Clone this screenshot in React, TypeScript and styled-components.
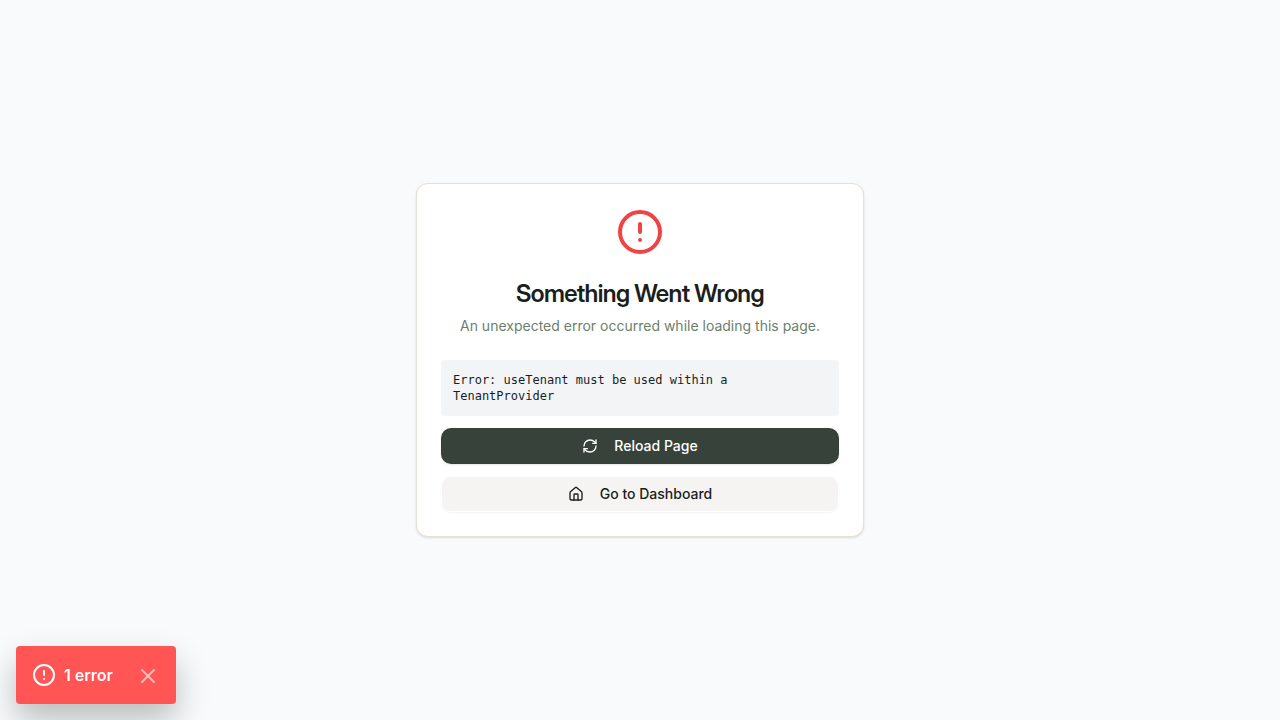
import React from "react";
import styled, { createGlobalStyle } from "styled-components";
import { CircleAlert, RefreshCw, House } from "lucide-react";

const GlobalStyle = createGlobalStyle`
  *, *::before, *::after { box-sizing: border-box; }
  body {
    margin: 0;
    background: #f9fafb;
    color: #1b1f1c;
    font-family: Inter, "Liberation Sans", sans-serif;
  }
`;

const Page = styled.main`
  min-height: 100vh;
  display: flex;
  align-items: center;
  justify-content: center;
  padding: 16px;
`;

const Card = styled.section`
  width: 100%;
  max-width: 448px;
  background: #fff;
  border: 1px solid #e8dfd5;
  border-radius: 12px;
  box-shadow: 0 1px 3px rgba(0, 0, 0, 0.1), 0 1px 2px -1px rgba(0, 0, 0, 0.1);
`;

const Header = styled.header`
  display: flex;
  flex-direction: column;
  align-items: center;
  gap: 6px;
  padding: 24px;
  text-align: center;
`;

const AlertIcon = styled(CircleAlert)`
  color: #ef4444;
  margin-bottom: 16px;
`;

const Title = styled.h1`
  margin: 0;
  font-family: "Inter Display", Inter, "Liberation Sans", sans-serif;
  font-size: 24px;
  line-height: 32px;
  font-weight: 600;
  letter-spacing: -0.025em;
`;

const Description = styled.p`
  margin: 0;
  font-size: 14px;
  line-height: 20px;
  color: #6b7f6e;
`;

const Content = styled.div`
  display: flex;
  flex-direction: column;
  gap: 12px;
  padding: 0 24px 24px;
`;

const Message = styled.div`
  padding: 12px;
  border-radius: 4px;
  background: #f3f4f6;
  font-family: "DejaVu Sans Mono", monospace;
  font-size: 12px;
  line-height: 16px;
`;

const Button = styled.button<{ $variant: "primary" | "outline" }>`
  display: flex;
  align-items: center;
  justify-content: center;
  gap: 16px;
  height: 36px;
  width: 100%;
  padding: 8px 16px;
  border: ${(p) => (p.$variant === "primary" ? "0" : "1px solid #fff")};
  border-radius: 10px;
  background: ${(p) => (p.$variant === "primary" ? "#37433a" : "#f5f4f3")};
  color: ${(p) => (p.$variant === "primary" ? "#fff" : "#1b1f1c")};
  box-shadow: 0 1px 2px rgba(0, 0, 0, ${(p) => (p.$variant === "primary" ? 0.1 : 0.05)});
  font: 500 14px/20px Inter, "Liberation Sans", sans-serif;
  cursor: pointer;
`;

const Toast = styled.aside`
  position: fixed;
  left: 16px;
  bottom: 16px;
  display: flex;
  align-items: center;
  gap: 8px;
  padding: 16px;
  border-radius: 4px;
  background: #ff5555;
  color: #fff;
  box-shadow: 0 16px 32px rgba(0, 0, 0, 0.25);
  font-size: 16px;
  line-height: 26px;
  font-weight: 600;
`;

const Close = styled.button`
  display: flex;
  margin-left: 15px;
  padding: 2px 0 0;
  border: 0;
  background: none;
  color: #fff;
  opacity: 0.6;
  cursor: pointer;
`;

export default function App() {
  return (
    <>
      <GlobalStyle />
      <Page>
        <Card>
          <Header>
            <AlertIcon size={48} />
            <Title>Something Went Wrong</Title>
            <Description>An unexpected error occurred while loading this page.</Description>
          </Header>
          <Content>
            <Message>Error: useTenant must be used within a TenantProvider</Message>
            <Button type="button" $variant="primary">
              <RefreshCw size={16} />
              Reload Page
            </Button>
            <Button type="button" $variant="outline">
              <House size={16} />
              Go to Dashboard
            </Button>
          </Content>
        </Card>
      </Page>
      <Toast>
        <CircleAlert size={24} />
        <span>1 error</span>
        <Close type="button" aria-label="Close">
          <svg width="24" height="24" viewBox="0 0 24 24" fill="none" stroke="currentColor" strokeWidth="2" strokeLinecap="round">
            <path d="M18 6 6 18M6 6l12 12" />
          </svg>
        </Close>
      </Toast>
    </>
  );
}
